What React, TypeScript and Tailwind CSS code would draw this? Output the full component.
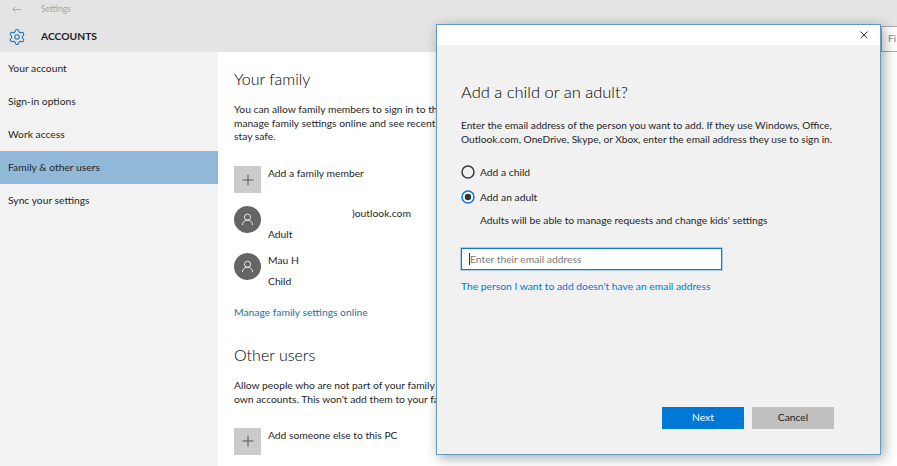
import React from "react";
import { Settings } from "lucide-react";

const font = "font-['Lato','Noto_Sans',sans-serif]";

function PlusTile() {
  return (
    <div className="w-[27px] h-[27px] bg-[#cbcbcb] flex items-center justify-center shrink-0">
      <svg width="12" height="12" viewBox="0 0 12 12" stroke="#555" strokeWidth="1">
        <path d="M6 0.500v11M0.500 6h11" />
      </svg>
    </div>
  );
}

function Avatar() {
  return (
    <div className="w-[27px] h-[27px] rounded-full bg-[#656565] flex items-center justify-center shrink-0">
      <svg width="13" height="13" viewBox="0 0 14 14" fill="none" stroke="#f0f0f0" strokeWidth="1">
        <circle cx="7" cy="4.500" r="3.300" />
        <path d="M1.500 13c0-3 2.200-5.200 5.500-5.200s5.500 2.200 5.500 5.200" />
      </svg>
    </div>
  );
}

function Radio({ on }: { on?: boolean }) {
  return (
    <svg width="14" height="14" viewBox="0 0 14 14" className="shrink-0">
      <circle cx="7" cy="7" r="6" fill={on ? "#ffffff" : "none"} stroke={on ? "#0b78d7" : "#3a3a3a"} strokeWidth="1.500" />
      {on && <circle cx="7" cy="7" r="3.200" fill="#333" />}
    </svg>
  );
}

const nav = ["Your account", "Sign-in options", "Work access", "Family & other users", "Sync your settings"];

export default function App() {
  return (
    <div className={`relative w-[897px] h-[466px] overflow-hidden bg-white text-[#262626] text-[10.3px] ${font}`}>
      <header className="h-[52px] bg-[#e4e4e4] flex flex-col pl-2">
        <div className="h-[18px] flex items-center pl-[4px] gap-[20px] text-[#a5a5a5]">
          <svg width="9" height="9" viewBox="0 0 11 9" fill="none" stroke="#a0a0a0" strokeWidth="1">
            <path d="M11 4.500H1M4.500 1L1 4.500 4.500 8" />
          </svg>
          <span className="text-[8.500px]">Settings</span>
        </div>
        <div className="flex items-center gap-[15px] h-[18px] mt-[10px]">
          <Settings size={18} strokeWidth={1.4} color="#1f6fb5" />
          <span className="text-[10.300px] font-bold text-[#222]">ACCOUNTS</span>
        </div>
      </header>

      <div className="flex h-[414px]">
        <nav className="w-[218px] bg-[#f2f2f2]">
          {nav.map((n, i) => (
            <div key={n} className={`h-[33px] flex items-center pl-2 ${i === 3 ? "bg-[#90b8d9]" : ""}`}>
              {n}
            </div>
          ))}
        </nav>
        <main className="flex-1 pl-4 pt-[15px] whitespace-nowrap">
          <h2 className="text-[16px] leading-[24px] text-[#000] font-light">Your family</h2>
          <p className="mt-[12px] leading-[13.700px]">
            You can allow family members to sign in to this PC.
            <br />
            manage family settings online and see recent activity to help kids
            <br />
            stay safe.
          </p>
          <div className="flex gap-[7px] mt-[22px]">
            <PlusTile />
            <span className="leading-[15px]">Add a family member</span>
          </div>
          <div className="flex gap-[7px] mt-[13px]">
            <Avatar />
            <div className="flex flex-col leading-[14px]">
              <span className="ml-[84px]">)outlook.com</span>
              <span className="mt-[7px]">Adult</span>
            </div>
          </div>
          <div className="flex gap-[7px] mt-[12px]">
            <Avatar />
            <div className="flex flex-col leading-[14px]">
              <span>Mau H</span>
              <span className="mt-[7px]">Child</span>
            </div>
          </div>
          <a className="block mt-[17px] leading-[14px] text-[#1d70ad]">Manage family settings online</a>
          <h2 className="mt-[24px] text-[16px] leading-[24px] text-[#000] font-light">Other users</h2>
          <p className="mt-[12px] leading-[13.700px]">
            Allow people who are not part of your family to sign in with their
            <br />
            own accounts. This won't add them to your family.
          </p>
          <div className="flex gap-[7px] mt-[21px]">
            <PlusTile />
            <span className="leading-[15px]">Add someone else to this PC</span>
          </div>
        </main>
      </div>

      <div className="absolute left-[881px] top-[26px] w-[16px] h-[26px] overflow-hidden bg-white border-y border-l border-[#a8a8a8] pl-[6px] pt-[4px] text-[#8a8a8a]">
        Fi
      </div>

      <div className="absolute left-[436px] top-[24px] w-[445px] h-[431px] bg-[#f1f1f1] border border-[#5f9cc5] shadow-[3px_3px_12px_rgba(0,0,0,0.35)] flex flex-col">
        <div className="h-[20px] bg-white flex justify-end items-start pr-[12px] pt-[6px] shrink-0">
          <svg width="8" height="8" viewBox="0 0 8 8" stroke="#333" strokeWidth="1">
            <path d="M0.500 0.500l7 7M7.500 0.500l-7 7" />
          </svg>
        </div>
        <div className="flex flex-col flex-1 pl-[24px] pt-[35px] pb-[25px]">
          <h1 className="text-[16.500px] leading-[24px] text-[#000] font-light">Add a child or an adult?</h1>
          <p className="mt-[15px] text-[10.170px] leading-[13.700px] whitespace-nowrap">
            Enter the email address of the person you want to add. If they use Windows, Office,
            <br />
            Outlook.com, OneDrive, Skype, or Xbox, enter the email address they use to sign in.
          </p>
          <div className="mt-[19px] flex items-center gap-[5px] h-[14px]">
            <Radio />
            <span>Add a child</span>
          </div>
          <div className="mt-[11px] flex items-center gap-[5px] h-[14px]">
            <Radio on />
            <span>Add an adult</span>
          </div>
          <p className="mt-[9px] ml-[19px] leading-[14px]">Adults will be able to manage requests and change kids' settings</p>
          <div className="mt-[21px] w-[261px] h-[22px] bg-white border border-[#0f78cc] shadow-[0_0_0_1px_#a9cfec] flex items-center pl-[7px] text-[#7a7a7a]">
            <span className="border-l border-[#333] leading-[12px]">Enter their email address</span>
          </div>
          <a className="mt-[9px] leading-[14px] text-[#0078d7]">The person I want to add doesn't have an email address</a>
          <div className="mt-auto flex gap-[8px] ml-[201px]">
            <button className="w-[82px] h-[22px] bg-[#0078d7] text-white">Next</button>
            <button className="w-[82px] h-[22px] bg-[#c0c0c0] text-[#222]">Cancel</button>
          </div>
        </div>
      </div>
    </div>
  );
}
